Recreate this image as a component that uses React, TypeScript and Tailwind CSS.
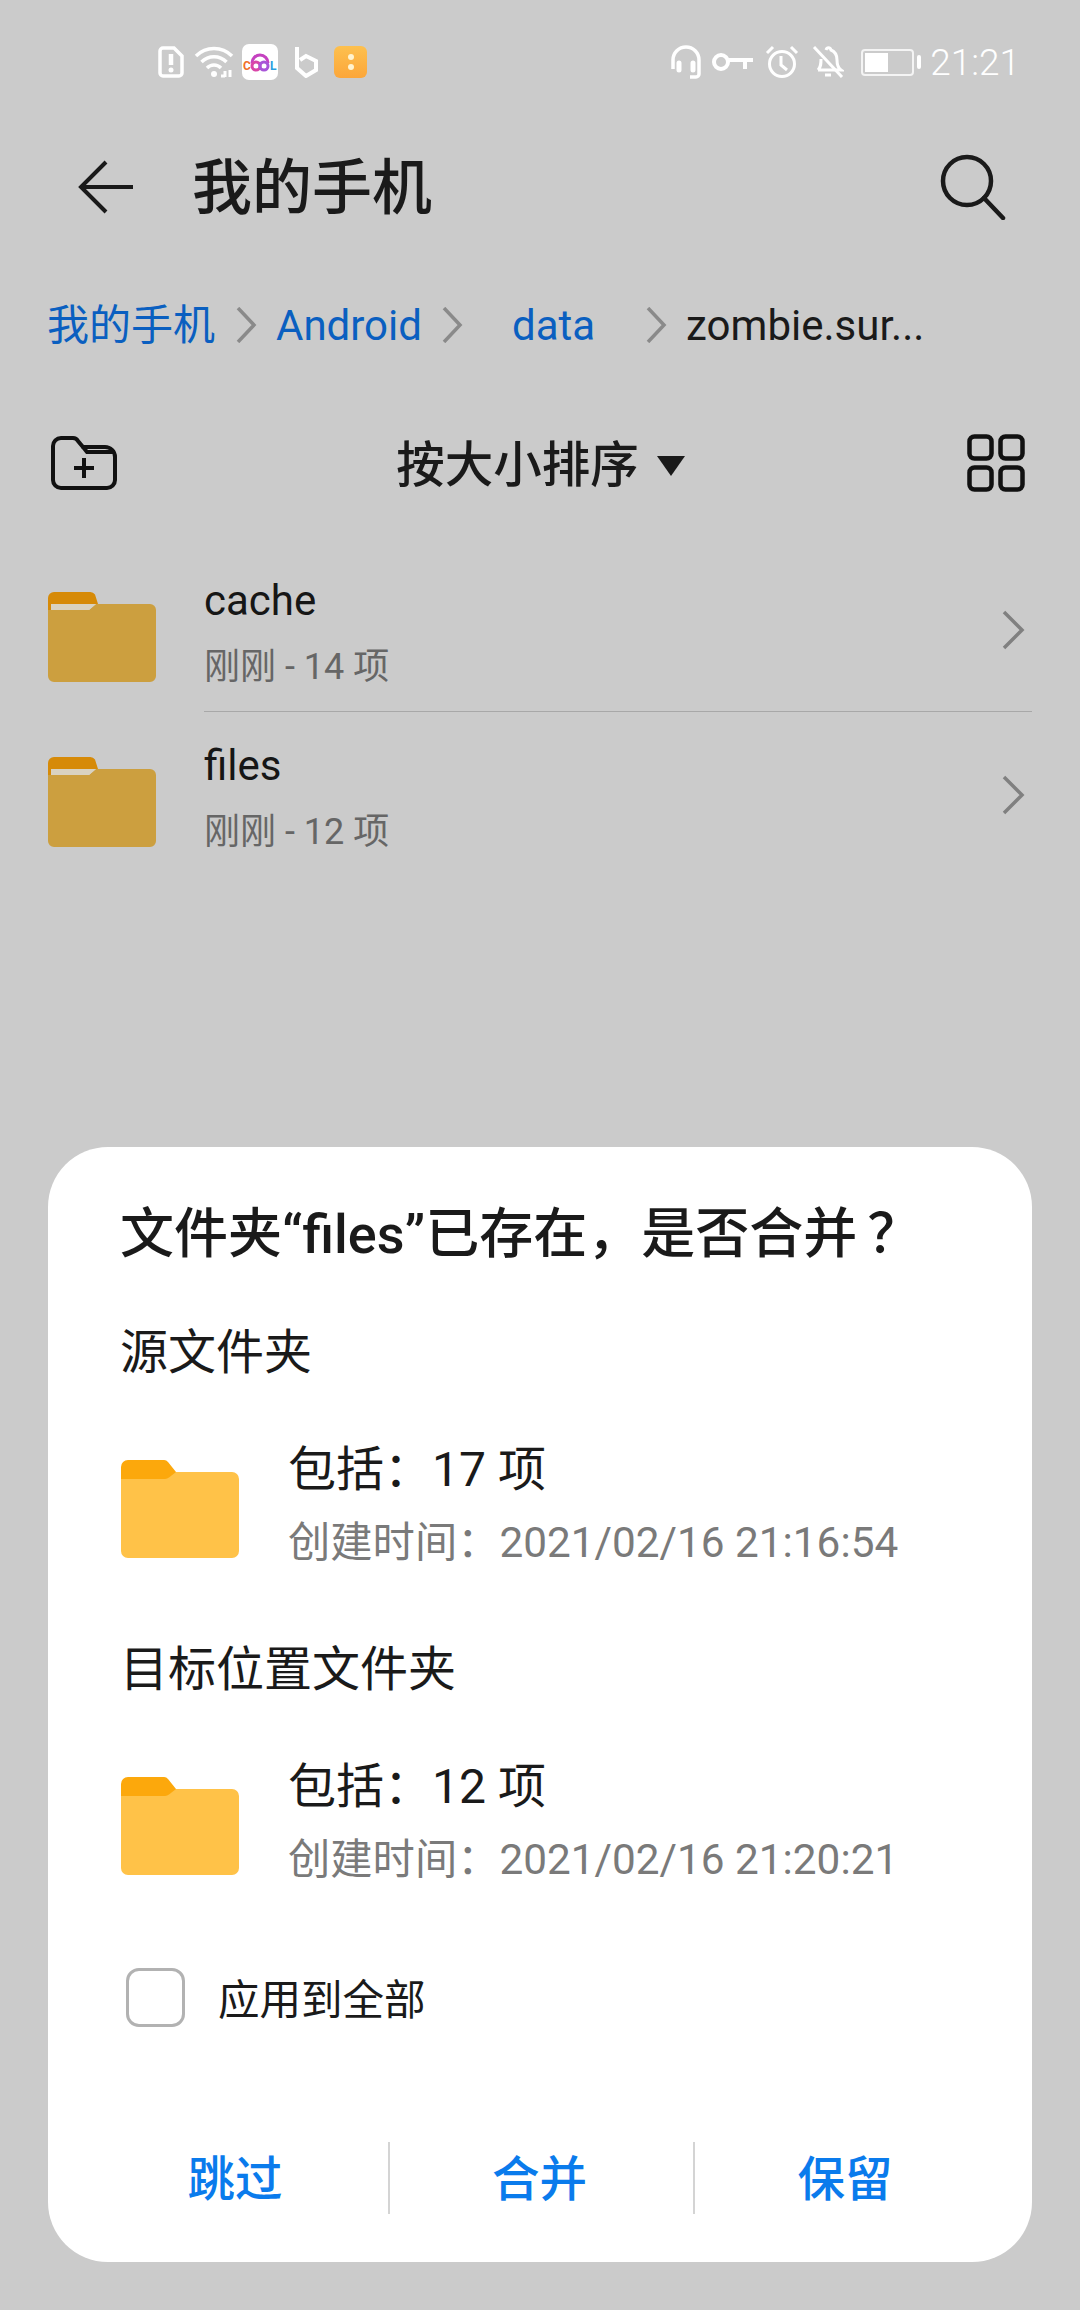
const font = { fontFamily: 'Roboto, "Noto Sans CJK SC", sans-serif' }

function ListFolder() {
  return (
    <svg width="108" height="90" viewBox="0 0 108 90" className="shrink-0">
      <path d="M0 18h41l7-6h54a6 6 0 0 1 6 6v66a6 6 0 0 1-6 6H6a6 6 0 0 1-6-6z" fill="#cc9f3f" />
      <path d="M3 12h45l-7 6H3z" fill="#d9d2c0" />
      <path d="M0 6a6 6 0 0 1 6-6h36a6 6 0 0 1 5 2.500L50 12H3v6H0z" fill="#d68a08" />
    </svg>
  )
}

function DialogFolder() {
  return (
    <svg width="118" height="98" viewBox="0 0 118 98" className="ml-px mt-[22px] shrink-0">
      <path d="M0 19h41l9-7h61a7 7 0 0 1 7 7v72a7 7 0 0 1-7 7H7a7 7 0 0 1-7-7z" fill="#ffc248" />
      <path d="M0 7a7 7 0 0 1 7-7h35a6 6 0 0 1 5 2l8 10-7 5.500a7 7 0 0 1-4 1.500H0z" fill="#fca80c" />
    </svg>
  )
}

function Chevron() {
  return (
    <svg width="24" height="40" viewBox="0 0 24 40" fill="none" stroke="#808080" strokeWidth="3.500" className="mb-[14px]">
      <path d="M3 2l18 18L3 38" />
    </svg>
  )
}

function CrumbChevron({ className = '' }: { className?: string }) {
  return (
    <svg width="22" height="36" viewBox="0 0 22 36" fill="none" stroke="#8a8a8a" strokeWidth="3.500" className={className}>
      <path d="M3 1l16 17L3 35" />
    </svg>
  )
}

function StatusIconsLeft() {
  return (
    <div className="flex items-center">
      {/* alert doc */}
      <svg width="26" height="32" viewBox="0 0 26 32" fill="none" className="ml-[158px]">
        <path d="M5 2h11l8 8v17a3 3 0 0 1-3 3H5a3 3 0 0 1-3-3V5a3 3 0 0 1 3-3z" stroke="#fff" strokeWidth="3.500" />
        <path d="M13 8v11" stroke="#fff" strokeWidth="4.500" />
        <circle cx="13" cy="24" r="2.500" fill="#fff" />
      </svg>
      {/* wifi */}
      <svg width="40" height="32" viewBox="0 0 40 32" fill="none" stroke="#fff" strokeWidth="3.500" className="ml-[10px]">
        <path d="M2 10c10-10 26-10 36 0" />
        <path d="M7.500 16c7-7 18-7 25 0" />
        <path d="M13 22c4-4 10-4 14 0" />
        <circle cx="20" cy="28" r="3" fill="#fff" stroke="none" />
        <path d="M27 30h4M31 25v6M36 24v7" strokeWidth="3" />
      </svg>
      {/* cool app */}
      <div className="ml-[8px] h-[36px] w-[36px] overflow-hidden rounded-[7px] bg-white">
        <svg width="36" height="36" viewBox="0 0 36 36">
          <path d="M10 19a8 8 0 0 1 16 0" fill="none" stroke="#c542c0" strokeWidth="3" />
          <circle cx="14" cy="22" r="4" fill="none" stroke="#d946a8" strokeWidth="3" />
          <circle cx="22" cy="22" r="4" fill="none" stroke="#a855d8" strokeWidth="3" />
          <text x="1" y="26" fontSize="12" fontWeight="700" fill="#f0702a" fontFamily="Roboto">C</text>
          <text x="28" y="26" fontSize="12" fontWeight="700" fill="#2a9fe0" fontFamily="Roboto">L</text>
        </svg>
      </div>
      {/* b app */}
      <svg width="26" height="32" viewBox="0 0 26 32" fill="none" stroke="#fff" strokeWidth="4" className="ml-[15px]">
        <path d="M4 1v21l9 8 10-6v-9l-10-5-6 4" />
      </svg>
      {/* orange app */}
      <div className="ml-[15px] flex h-[32px] w-[33px] flex-col items-center justify-center gap-[4px] rounded-[6px] bg-gradient-to-b from-[#fdc04e] to-[#fba63a]">
        <div className="h-[6px] w-[6px] rounded-full bg-[#fff3cf]" />
        <div className="h-[6px] w-[6px] rounded-full bg-[#fff3cf]" />
      </div>
    </div>
  )
}

function StatusIconsRight() {
  return (
    <div className="flex items-center">
      <svg width="32" height="34" viewBox="0 0 32 34" fill="none" stroke="#fff" strokeWidth="3.500">
        <path d="M3 24v-9a13 13 0 0 1 26 0v14a3 3 0 0 1-3 3h-6" />
        <path d="M9 18v7M23 18v7" strokeWidth="5" strokeLinecap="round" />
      </svg>
      <svg width="42" height="20" viewBox="0 0 42 20" fill="none" stroke="#fff" strokeWidth="4" className="ml-[10px]">
        <circle cx="9" cy="10" r="7" />
        <path d="M16 8h25M33 8v9" />
      </svg>
      <svg width="34" height="34" viewBox="0 0 34 34" fill="none" stroke="#fff" strokeWidth="3" className="ml-[11px]">
        <circle cx="17" cy="19" r="12.500" />
        <path d="M16 11v9l6 5" />
        <path d="M2 8l6-6M32 8l-6-6" />
      </svg>
      <svg width="32" height="34" viewBox="0 0 32 34" fill="none" stroke="#fff" strokeWidth="3" className="ml-[13px]">
        <path d="M6 25c3-3 3-6 3-11M14 5c1-3 4-3 5 0 5 2 6 6 6 10 0 5 1 8 4 10H6" />
        <path d="M13 30h6" />
        <path d="M2 2l28 30" />
      </svg>
      <div className="ml-[17px] flex h-[27px] w-[53px] items-stretch rounded-[4px] border-2 border-[#f4f4f4] p-[2px]">
        <div className="w-[23px] bg-white" />
      </div>
      <div className="ml-[3px] h-[14px] w-[4px] rounded-[2px] bg-white" />
      <span className="ml-[9px] mr-[60px] text-[37px] font-light leading-none text-white">21:21</span>
    </div>
  )
}

function FileRow({ name, sub }: { name: string; sub: string }) {
  return (
    <div className="flex h-[148px] items-center pl-[48px] pr-[55px]">
      <ListFolder />
      <div className="mb-[7px] ml-[48px] flex-1">
        <p className="text-[42px] leading-[50px] text-[#161616]">{name}</p>
        <p className="mt-[16px] text-[36px] leading-[50px] text-[#666666]">{sub}</p>
      </div>
      <Chevron />
    </div>
  )
}

function FolderInfo({ count, time }: { count: string; time: string }) {
  return (
    <div className="mt-[55px] flex">
      <DialogFolder />
      <div className="ml-[49px] pt-[2px]">
        <p className="text-[48px] leading-[60px] text-[#1a1a1a]">包括：{count} 项</p>
        <p className="mt-[13px] text-[42.300px] leading-[60px] text-[#7a7a7a]">创建时间：{time}</p>
      </div>
    </div>
  )
}

export default function App() {
  return (
    <div style={font} className="flex h-[2310px] w-[1080px] flex-col overflow-hidden bg-[#cbcbcb]">
      {/* status bar */}
      <div className="flex h-[124px] items-center justify-between">
        <StatusIconsLeft />
        <StatusIconsRight />
      </div>

      {/* app bar */}
      <div className="flex h-[126px] items-center justify-between pl-[78px] pr-[74px]">
        <div className="flex items-center">
          <svg width="56" height="56" viewBox="0 0 56 56" fill="none" stroke="#1a1a1a" strokeWidth="4">
            <path d="M28 3L3 28l25 25M3 28h52" />
          </svg>
          <h1 className="ml-[58px] pt-[3px] text-[60px] font-medium leading-none text-[#1a1a1a]">我的手机</h1>
        </div>
        <svg width="66" height="66" viewBox="0 0 66 66" fill="none" stroke="#1a1a1a" strokeWidth="4.500">
          <circle cx="27" cy="27" r="24" />
          <path d="M44 44l19 20" strokeLinecap="round" />
        </svg>
      </div>

      {/* breadcrumb */}
      <div className="flex h-[150px] items-center pl-[47px] text-[42px] leading-none">
        <span className="pt-[2px] text-[#0a5fc0]">我的手机</span>
        <CrumbChevron className="ml-[20px]" />
        <span className="ml-[19px] pt-[2px] text-[#0a5fc0]">Android</span>
        <CrumbChevron className="ml-[19px]" />
        <span className="ml-[49px] pt-[2px] text-[#0a5fc0]">data</span>
        <CrumbChevron className="ml-[50px]" />
        <span className="ml-[19px] pt-[2px] text-[#1a1a1a]">zombie.sur...</span>
      </div>

      {/* sort row */}
      <div className="flex h-[126px] items-center justify-between pl-[51px] pr-[55px]">
        <svg width="66" height="54" viewBox="0 0 66 54" fill="none" stroke="#111111" strokeWidth="4">
          <path d="M2 10a8 8 0 0 1 8-8h12a6 6 0 0 1 5 3l5 6h22a10 10 0 0 1 10 10v23a8 8 0 0 1-8 8H10a8 8 0 0 1-8-8z" />
          <path d="M32 11l4 5h28" />
          <path d="M33 22v20M23 32h20" />
        </svg>
        <div className="mr-[3px] flex items-center pt-[6px]">
          <span className="text-[48.500px] font-medium leading-none text-[#1a1a1a]">按大小排序</span>
          <div className="ml-[18px] h-0 w-0 border-x-[14px] border-t-[20px] border-x-transparent border-t-[#1a1a1a]" />
        </div>
        <svg width="58" height="58" viewBox="0 0 58 58" fill="none" stroke="#111111" strokeWidth="4.500">
          <rect x="2.500" y="2.500" width="22" height="22" rx="5" />
          <rect x="33.500" y="2.500" width="22" height="22" rx="5" />
          <rect x="2.500" y="33.500" width="22" height="22" rx="5" />
          <rect x="33.500" y="33.500" width="22" height="22" rx="5" />
        </svg>
      </div>

      {/* file list */}
      <div className="mt-[37px]">
        <FileRow name="cache" sub="刚刚 - 14 项" />
        <div className="mb-[16px] ml-[204px] mr-[48px] h-px bg-[#a8a8a8]" />
        <FileRow name="files" sub="刚刚 - 12 项" />
      </div>

      {/* merge dialog */}
      <div className="mx-[48px] mb-[48px] mt-auto rounded-[60px] bg-white px-[72px] pb-[48px] pt-[58px]">
        <h2 className="text-[54px] font-medium leading-[60px] text-[#1a1a1a]">
          文件夹“files”已存在，是否合并<span className="ml-[10px]">？</span>
        </h2>
        <p className="mt-[58px] text-[48px] leading-[60px] text-[#1a1a1a]">源文件夹</p>
        <FolderInfo count="17" time="2021/02/16 21:16:54" />
        <p className="mt-[67px] text-[48px] leading-[60px] text-[#1a1a1a]">目标位置文件夹</p>
        <FolderInfo count="12" time="2021/02/16 21:20:21" />

        <div className="mt-[78px] flex items-center pl-[6px]">
          <div className="h-[59px] w-[59px] rounded-[13px] border-[3px] border-[#b2b2b2]" />
          <span className="ml-[33px] pt-[6px] text-[41.500px] leading-none text-[#1a1a1a]">应用到全部</span>
        </div>

        <div className="-mr-[36px] mt-[115px] flex h-[72px] items-center text-[47.500px] font-medium leading-none text-[#0a7bec]">
          <span className="w-[268px] pr-[38px] pt-[6px] text-center">跳过</span>
          <div className="h-full w-[2px] bg-[#d4d4d4]" />
          <span className="w-[303px] pr-[4px] pt-[6px] text-center">合并</span>
          <div className="h-full w-[2px] bg-[#d4d4d4]" />
          <span className="w-[300px] pt-[6px] text-center">保留</span>
        </div>
      </div>
    </div>
  )
}
